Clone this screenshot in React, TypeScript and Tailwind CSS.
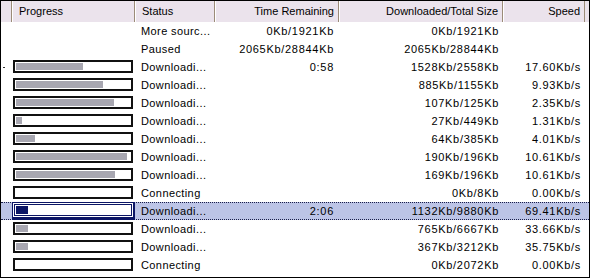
import React from 'react';

type Row = {
  bar: number | null;
  status: string;
  time: string;
  size: string;
  speed: string;
  dot?: boolean;
  selected?: boolean;
};

const rows: Row[] = [
  { bar: null, status: 'More sourc...', time: '0Kb/1921Kb', size: '0Kb/1921Kb', speed: '' },
  { bar: null, status: 'Paused', time: '2065Kb/28844Kb', size: '2065Kb/28844Kb', speed: '' },
  { bar: 67, status: 'Downloadi...', time: '0:58', size: '1528Kb/2558Kb', speed: '17.60Kb/s', dot: true },
  { bar: 87, status: 'Downloadi...', time: '', size: '885Kb/1155Kb', speed: '9.93Kb/s' },
  { bar: 98, status: 'Downloadi...', time: '', size: '107Kb/125Kb', speed: '2.35Kb/s' },
  { bar: 6, status: 'Downloadi...', time: '', size: '27Kb/449Kb', speed: '1.31Kb/s' },
  { bar: 19, status: 'Downloadi...', time: '', size: '64Kb/385Kb', speed: '4.01Kb/s' },
  { bar: 111, status: 'Downloadi...', time: '', size: '190Kb/196Kb', speed: '10.61Kb/s' },
  { bar: 99, status: 'Downloadi...', time: '', size: '169Kb/196Kb', speed: '10.61Kb/s' },
  { bar: 0, status: 'Connecting', time: '', size: '0Kb/8Kb', speed: '0.00Kb/s' },
  { bar: 12, status: 'Downloadi...', time: '2:06', size: '1132Kb/9880Kb', speed: '69.41Kb/s', selected: true },
  { bar: 12, status: 'Downloadi...', time: '', size: '765Kb/6667Kb', speed: '33.66Kb/s' },
  { bar: 12, status: 'Downloadi...', time: '', size: '367Kb/3212Kb', speed: '35.75Kb/s' },
  { bar: 0, status: 'Connecting', time: '', size: '0Kb/2072Kb', speed: '0.00Kb/s' },
];

const cols = 'grid grid-cols-[11px_123px_80px_124px_164px_82px_4px]';

function Bar({ value, selected }: { value: number; selected?: boolean }) {
  if (selected) {
    return (
      <div className="h-full bg-[#0b1565] pl-[1px] pt-[1px]">
        <div className="w-[120px] h-[14px] border border-white">
          <div className="h-full border border-[#0b1565] bg-white p-[1px]">
            <div className="h-full bg-[#0b1565]" style={{ width: value }} />
          </div>
        </div>
      </div>
    );
  }
  return (
    <div className="pl-[1px] pt-[2px]">
      <div className="w-[120px] h-[13px] border-2 border-[#111] bg-white p-[1px]">
        <div className="h-full bg-[#a8a7b1]" style={{ width: value }} />
      </div>
    </div>
  );
}

export default function App() {
  return (
    <div
      className="w-[590px] h-[278px] bg-white border border-black text-[11px] text-black overflow-hidden"
      style={{ fontFamily: '"Liberation Sans", Arial, sans-serif' }}
    >
      {/* header */}
      <div className={`${cols} h-[21px] bg-[#ebe3ec]`}>
        <div className="border-r border-[#9b8b78]" />
        <div className="border-l border-white border-r border-r-[#9b8b78] pl-[6px] leading-[20px]">Progress</div>
        <div className="border-l border-white border-r border-r-[#9b8b78] pl-[6px] leading-[20px]">Status</div>
        <div className="border-l border-white border-r border-r-[#9b8b78] pr-[4px] text-right leading-[20px]">Time Remaining</div>
        <div className="border-l border-white border-r border-r-[#9b8b78] pr-[4px] text-right leading-[20px]">Downloaded/Total Size</div>
        <div className="border-l border-white border-r border-r-[#9b8b78] pr-[4px] text-right leading-[20px]">Speed</div>
        <div />
      </div>

      {/* rows */}
      <div>
        {rows.map((r, i) => (
          <div
            key={i}
            className={`${cols} h-[18px] ${
              r.selected ? 'bg-[#bcc4e6] border-y border-dotted border-[#1a1f4a]' : ''
            }`}
          >
            <div className="relative">
              {r.dot && <div className="absolute left-[2px] top-[9px] w-[2px] h-[1px] bg-[#333]" />}
            </div>
            <div className={r.selected ? '-my-px' : ''}>
              {r.bar !== null && <Bar value={r.bar} selected={r.selected} />}
            </div>
            <div className={`pl-[6px] tracking-[0.4px] ${r.selected ? 'leading-[16px]' : 'leading-[18px]'} whitespace-nowrap`}>
              {r.status}
            </div>
            <div className={`pr-[5px] text-right tracking-[0.7px] ${r.selected ? 'leading-[16px]' : 'leading-[18px]'} whitespace-nowrap`}>
              {r.time}
            </div>
            <div className={`pr-[4px] text-right tracking-[0.7px] ${r.selected ? 'leading-[16px]' : 'leading-[18px]'} whitespace-nowrap`}>
              {r.size}
            </div>
            <div className={`pr-[4px] text-right tracking-[0.7px] ${r.selected ? 'leading-[16px]' : 'leading-[18px]'} whitespace-nowrap`}>
              {r.speed}
            </div>
            <div />
          </div>
        ))}
      </div>
    </div>
  );
}
